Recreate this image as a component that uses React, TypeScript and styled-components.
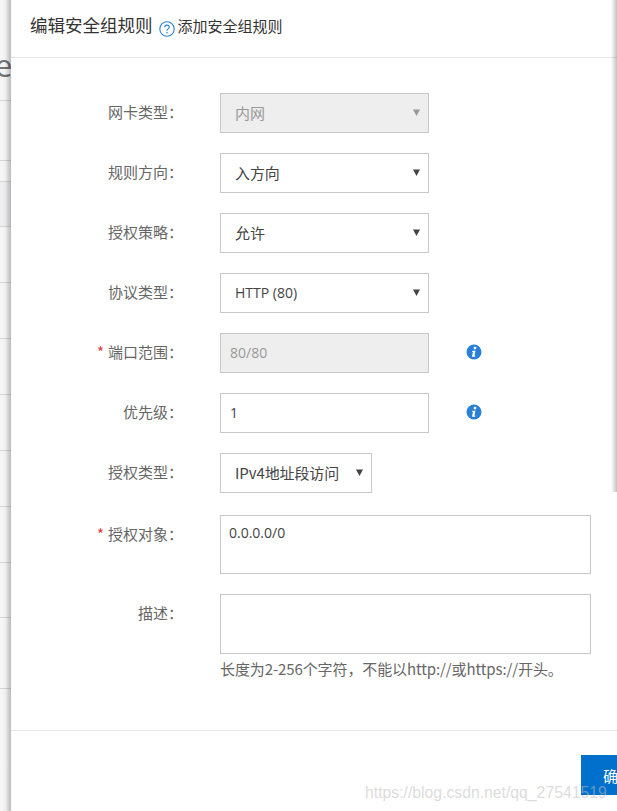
import React from 'react'
import styled, { createGlobalStyle } from 'styled-components'

const GlobalStyle = createGlobalStyle`
  html, body {
    margin: 0;
    padding: 0;
    height: 811px;
    overflow: hidden;
    background: #fff;
  }
  * { box-sizing: border-box; }
  body {
    font-family: "Noto Sans CJK SC", "Open Sans", sans-serif;
  }
`

const Page = styled.div`
  display: flex;
  position: relative;
  width: 617px;
  height: 811px;
  overflow: hidden;
`

const Backdrop = styled.div`
  position: relative;
  width: 11px;
  height: 811px;
  flex: none;
  overflow: hidden;
  background: #fff;
`

const BackdropRow = styled.div<{ $h: number; $tint?: boolean }>`
  height: ${({ $h }) => $h}px;
  border-bottom: 1px solid #dcdcdc;
  background: ${({ $tint }) => ($tint ? '#f7f7f9' : '#fff')};
`

const BackdropLetter = styled.span`
  position: absolute;
  left: -5px;
  top: 45px;
  font: 31px/40px "Open Sans", sans-serif;
  color: #777;
`

const BackdropShade = styled.div`
  position: absolute;
  inset: 0;
  background: linear-gradient(to right, rgba(0, 0, 0, 0.03), rgba(0, 0, 0, 0.05) 45%, rgba(0, 0, 0, 0.27));
`

const Dialog = styled.div`
  flex: 1;
  display: flex;
  flex-direction: column;
  background: #fff;
`

const Header = styled.div`
  height: 58px;
  padding: 0 19px;
  display: flex;
  align-items: center;
  border-bottom: 1px solid #e6e6e6;
  flex: none;
  color: #333;
`

const Title = styled.h2`
  margin: -7px 0 0;
  font-size: 17.5px;
  font-weight: 400;
  line-height: 26px;
  color: #333;
`

const HelpIcon = styled.svg`
  width: 16px;
  height: 16px;
  margin: 0 3px 0 6px;
  flex: none;
`

const Subtitle = styled.span`
  margin-top: -5px;
  font-size: 15px;
  line-height: 26px;
  color: #333;
`

const Form = styled.div`
  height: 673px;
  padding-top: 35px;
  display: flex;
  flex-direction: column;
  flex: none;
  border-bottom: 1px solid #e6e6e6;
`

const Row = styled.div<{ $mb?: number }>`
  display: flex;
  align-items: flex-start;
  margin-bottom: ${({ $mb }) => $mb ?? 20}px;
`

const Label = styled.label`
  width: 172px;
  flex: none;
  margin-right: 37px;
  font-size: 15px;
  line-height: 38px;
  color: #666;
  text-align: right;
`

const Star = styled.span`
  color: #e4393c;
  margin-right: 4px;
`

const SelectWrap = styled.div<{ $w: number }>`
  position: relative;
  width: ${({ $w }) => $w}px;
  height: 40px;
  flex: none;
`

const Select = styled.select<{ $latin?: boolean }>`
  appearance: none;
  display: block;
  width: 100%;
  height: 100%;
  padding: 0 13px 2px 14px;
  border: 1px solid #c8c8c8;
  border-radius: 0;
  outline: none;
  background: #fff;
  font: inherit;
  font-family: ${({ $latin }) => ($latin ? '"Open Sans", sans-serif' : 'inherit')};
  font-size: ${({ $latin }) => ($latin ? 14 : 15)}px;
  letter-spacing: ${({ $latin }) => ($latin ? 0 : -0.1)}px;
  color: #444;
  opacity: 1;

  &:disabled {
    background: #eee;
    color: #999;
  }
`

const Arrow = styled.svg<{ $off?: boolean }>`
  position: absolute;
  right: 9px;
  top: 16px;
  width: 7px;
  height: 7px;
  fill: ${({ $off }) => ($off ? '#999' : '#444')};
`

const Input = styled.input`
  display: block;
  width: 209px;
  height: 40px;
  flex: none;
  padding: 0 8px 2px 9px;
  border: 1px solid #c8c8c8;
  border-radius: 0;
  outline: none;
  font: 14px "Open Sans", sans-serif;
  color: #444;
  background: #fff;

  &:disabled {
    background: #eee;
    color: #999;
    opacity: 1;
  }
`

const InfoIcon = styled.svg`
  width: 16px;
  height: 16px;
  margin: 11px 0 0 37px;
  flex: none;
`

const Area = styled.textarea<{ $h: number }>`
  display: block;
  width: 371px;
  height: ${({ $h }) => $h}px;
  padding: 6px 8px;
  border: 1px solid #c8c8c8;
  border-radius: 0;
  outline: none;
  resize: none;
  font: 14px/22px "Open Sans", sans-serif;
  color: #444;
  background: #fff;
`

const Field = styled.div`
  display: flex;
  flex-direction: column;
`

const Hint = styled.div`
  margin-top: 5px;
  font-size: 15px;
  letter-spacing: -0.1px;
  line-height: 20px;
  color: #666;
  white-space: nowrap;
`

const Footer = styled.div`
  flex: 1;
  display: flex;
  justify-content: flex-end;
  padding-top: 24px;
  overflow: hidden;
`

const ConfirmButton = styled.button`
  width: 36px;
  height: 40px;
  padding: 0 0 0 22px;
  border: none;
  border-radius: 0;
  background: #0070cc;
  color: #fff;
  font: inherit;
  font-size: 15px;
  text-align: left;
  white-space: nowrap;
  overflow: hidden;
`

const RightShade = styled.div`
  position: absolute;
  right: 0;
  top: 0;
  width: 6px;
  height: 492px;
  background: linear-gradient(to right, rgba(0, 0, 0, 0), rgba(0, 0, 0, 0.24));
`

const Watermark = styled.span`
  position: absolute;
  left: 365px;
  top: 782px;
  font: 15.75px/22px "Liberation Sans", sans-serif;
  color: rgba(190, 190, 190, 0.55);
  white-space: nowrap;
`

const Caret: React.FC<{ off?: boolean }> = ({ off }) => (
  <Arrow $off={off} viewBox="0 0 7 7">
    <path d="M0 0.5h7L3.5 7z" />
  </Arrow>
)

const Info: React.FC = () => (
  <InfoIcon viewBox="0 0 16 16">
    <circle cx="8" cy="8" r="7.5" fill="#2a7fd6" />
    <circle cx="9" cy="4.1" r="1.4" fill="#fff" />
    <path d="M6.4 6.8h3.1L8.4 11.6h1l-.3 1.1H5.9L7 8H6.1z" fill="#fff" />
  </InfoIcon>
)

const backdropRows = [
  { h: 101 },
  { h: 60 },
  { h: 21 },
  { h: 45, tint: true },
  { h: 56 },
  { h: 56 },
  { h: 56 },
  { h: 56 },
  { h: 56 },
  { h: 56 },
  { h: 55 },
  { h: 71 },
]

const App: React.FC = () => {
  return (
    <Page>
      <GlobalStyle />
      <Backdrop>
        {backdropRows.map((row, i) => (
          <BackdropRow key={i} $h={row.h} $tint={row.tint} />
        ))}
        <BackdropLetter>e</BackdropLetter>
        <BackdropShade />
      </Backdrop>
      <Dialog>
        <Header>
          <Title>编辑安全组规则</Title>
          <HelpIcon viewBox="0 0 16 16">
            <circle cx="8" cy="8" r="7.2" fill="none" stroke="#2a7fd6" strokeWidth="1.1" />
            <path
              d="M5.7 6.3c0-1.4 1-2.2 2.3-2.2s2.3.8 2.3 2c0 1.8-2.3 1.8-2.3 3.6"
              fill="none"
              stroke="#2a7fd6"
              strokeWidth="1.1"
            />
            <circle cx="8" cy="11.8" r=".8" fill="#2a7fd6" />
          </HelpIcon>
          <Subtitle>添加安全组规则</Subtitle>
        </Header>
        <Form>
          <Row>
            <Label>网卡类型：</Label>
            <SelectWrap $w={209}>
              <Select disabled defaultValue="内网">
                <option>内网</option>
              </Select>
              <Caret off />
            </SelectWrap>
          </Row>
          <Row>
            <Label>规则方向：</Label>
            <SelectWrap $w={209}>
              <Select defaultValue="入方向">
                <option>入方向</option>
              </Select>
              <Caret />
            </SelectWrap>
          </Row>
          <Row>
            <Label>授权策略：</Label>
            <SelectWrap $w={209}>
              <Select defaultValue="允许">
                <option>允许</option>
              </Select>
              <Caret />
            </SelectWrap>
          </Row>
          <Row>
            <Label>协议类型：</Label>
            <SelectWrap $w={209}>
              <Select $latin defaultValue="HTTP (80)">
                <option>HTTP (80)</option>
              </Select>
              <Caret />
            </SelectWrap>
          </Row>
          <Row>
            <Label>
              <Star>*</Star>端口范围：
            </Label>
            <Input disabled defaultValue="80/80" />
            <Info />
          </Row>
          <Row>
            <Label>优先级：</Label>
            <Input defaultValue="1" />
            <Info />
          </Row>
          <Row $mb={22}>
            <Label>授权类型：</Label>
            <SelectWrap $w={152}>
              <Select defaultValue="IPv4地址段访问">
                <option>IPv4地址段访问</option>
              </Select>
              <Caret />
            </SelectWrap>
          </Row>
          <Row>
            <Label>
              <Star>*</Star>授权对象：
            </Label>
            <Area $h={59} defaultValue="0.0.0.0/0" />
          </Row>
          <Row $mb={0}>
            <Label>描述：</Label>
            <Field>
              <Area $h={60} defaultValue="" />
              <Hint>长度为2-256个字符，不能以http://或https://开头。</Hint>
            </Field>
          </Row>
        </Form>
        <Footer>
          <ConfirmButton>确定</ConfirmButton>
        </Footer>
      </Dialog>
      <RightShade />
      <Watermark>https://blog.csdn.net/qq_27541519</Watermark>
    </Page>
  )
}

export default App
